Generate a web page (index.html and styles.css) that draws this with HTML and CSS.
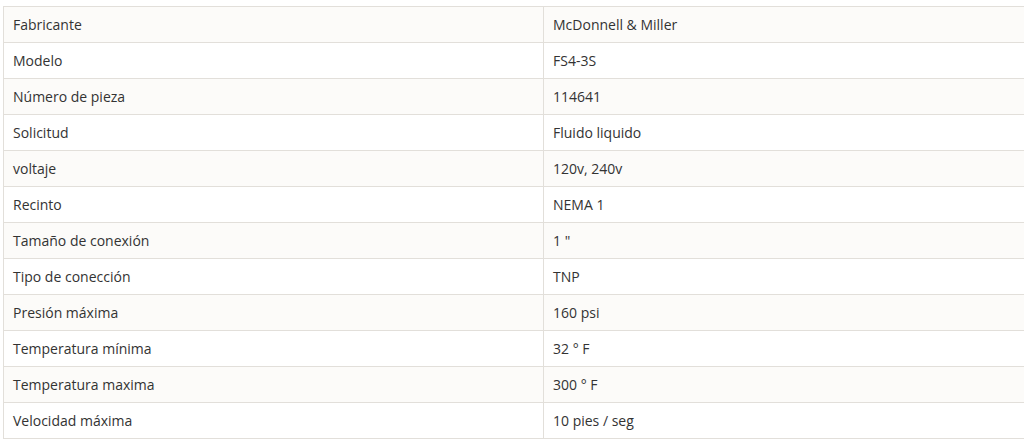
FILE: index.html
```html
<!DOCTYPE html>
<html lang="es">
<head>
<meta charset="utf-8">
<link rel="stylesheet" href="styles.css">
</head>
<body>
<div class="wrap">
<table class="specs">
<colgroup><col class="c1"><col class="c2"></colgroup>
<tbody>
<tr><td>Fabricante</td><td>McDonnell &amp; Miller</td></tr>
<tr><td>Modelo</td><td>FS4-3S</td></tr>
<tr><td>Número de pieza</td><td>114641</td></tr>
<tr><td>Solicitud</td><td>Fluido liquido</td></tr>
<tr><td>voltaje</td><td>120v, 240v</td></tr>
<tr><td>Recinto</td><td>NEMA 1</td></tr>
<tr><td>Tamaño de conexión</td><td>1 "</td></tr>
<tr><td>Tipo de conección</td><td>TNP</td></tr>
<tr><td>Presión máxima</td><td>160 psi</td></tr>
<tr><td>Temperatura mínima</td><td>32 ° F</td></tr>
<tr><td>Temperatura maxima</td><td>300 ° F</td></tr>
<tr><td>Velocidad máxima</td><td>10 pies / seg</td></tr>
</tbody>
</table>
</div>
</body>
</html>
```
FILE: styles.css
```css
html, body {
  margin: 0;
  padding: 0;
  background: #ffffff;
  overflow: hidden;
}
.wrap {
  padding: 6px 0 0 3px;
}
.specs {
  border-collapse: collapse;
  table-layout: fixed;
  width: 1060px;
  font-family: "Open Sans", "Noto Sans", sans-serif;
  font-size: 14px;
  color: #333333;
}
.specs col.c1 { width: 540px; }
.specs td {
  border: 1px solid #e2dfda;
  padding: 8px 9px;
  line-height: 19px;
  height: 19px;
  vertical-align: middle;
  white-space: nowrap;
}
.specs tr:nth-child(odd) td {
  background: #fcfbf9;
}
```
